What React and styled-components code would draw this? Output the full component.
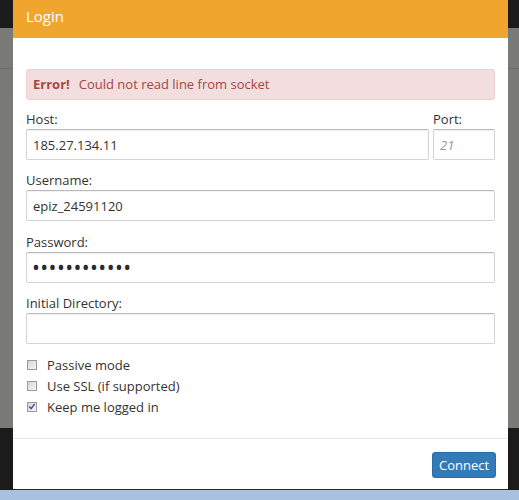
import React from "react";
import styled, { createGlobalStyle } from "styled-components";

const Global = createGlobalStyle`
  html, body { margin: 0; padding: 0; }
  body { font-family: "Open Sans", "Noto Sans", sans-serif; }
  * { box-sizing: border-box; }
`;

const Page = styled.div`
  width: 519px;
  height: 500px;
  overflow: hidden;
  padding-left: 13px;
  background: linear-gradient(
    to bottom,
    #1b1b1b 0px,
    #1b1b1b 28px,
    #797a76 28px,
    #797a76 68px,
    #6d6e6a 68px,
    #6d6e6a 69px,
    #797a76 69px,
    #797a76 428px,
    #1b1b1b 428px,
    #1b1b1b 490px,
    #a7c1df 490px
  );
`;

const Modal = styled.div`
  width: 495px;
  height: 490px;
  background: #fff;
  display: flex;
  flex-direction: column;
  border-bottom: 1px solid #2a2a2a;
`;

const Header = styled.div`
  height: 38px;
  flex: none;
  background: #f0a62e;
  color: #fff;
  font-size: 15px;
  line-height: 20px;
  padding: 6px 13px 0;
`;

const Body = styled.div`
  flex: 1;
  padding: 31px 13px 0;
  display: flex;
  flex-direction: column;
`;

const Alert = styled.div`
  height: 31px;
  background: #f2dede;
  border: 1px solid #ebccd1;
  border-radius: 3px;
  color: #a94442;
  font-size: 13px;
  line-height: 29px;
  padding: 0 6px;
  margin-bottom: 10px;
  display: flex;
  gap: 9px;
`;

const Strong = styled.b`
  font-weight: 700;
`;

const Row = styled.div`
  display: flex;
  gap: 4px;
  margin-bottom: 11.3px;
`;

const Group = styled.div`
  display: flex;
  flex-direction: column;
  flex: ${(p) => (p.$w ? `0 0 ${p.$w}px` : "1")};
  min-width: 0;
`;

const Label = styled.label`
  font-size: 13px;
  line-height: 19px;
  color: #333;
`;

const Input = styled.input`
  height: 31px;
  width: 100%;
  border: 1px solid #d3d3d3;
  border-top-color: #b9b9b9;
  border-radius: 2px;
  box-shadow: inset 0 1px 1px rgba(0, 0, 0, 0.06);
  padding: 0 6px;
  font-family: "Open Sans", "Noto Sans", sans-serif;
  font-size: 13px;
  color: #333;
  outline: none;
  background: #fff;
  &::placeholder {
    color: #999;
    font-style: italic;
  }
  &[type="password"] {
    font-size: 21px;
    letter-spacing: 0.4px;
    color: #2b2b2b;
    padding-left: 5px;
  }
`;

const Checks = styled.div`
  display: flex;
  flex-direction: column;
  margin-top: -1px;
`;

const CheckRow = styled.label`
  display: flex;
  align-items: center;
  height: 21px;
  font-size: 13px;
  color: #333;
  gap: 10px;
  padding-left: 1px;
`;

const Box = styled.span`
  width: 10px;
  height: 10px;
  border: 1px solid #9a9a9a;
  background: linear-gradient(135deg, #d8d8d8, #f4f4f4);
  display: flex;
  align-items: center;
  justify-content: center;
  flex: none;
`;

const Footer = styled.div`
  flex: none;
  border-top: 1px solid #e5e5e5;
  padding: 13px 12px 11px;
  display: flex;
  justify-content: flex-end;
`;

const Button = styled.button`
  height: 26px;
  width: 64px;
  background: #337ab7;
  border: 1px solid #2e6da4;
  border-radius: 3px;
  color: #fff;
  font-family: "Open Sans", "Noto Sans", sans-serif;
  font-size: 13px;
  padding: 0;
`;

function Check({ checked, children }) {
  return (
    <CheckRow>
      <Box>
        {checked && (
          <svg width="9" height="9" viewBox="0 0 9 9">
            <path d="M1.5 4.5 L3.5 7 L7.5 1.5" fill="none" stroke="#2a4fa8" strokeWidth="1.5" />
          </svg>
        )}
      </Box>
      {children}
    </CheckRow>
  );
}

export default function App() {
  return (
    <Page>
      <Global />
      <Modal>
        <Header>Login</Header>
        <Body>
          <Alert>
            <Strong>Error!</Strong>
            <span>Could not read line from socket</span>
          </Alert>
          <Row>
            <Group>
              <Label>Host:</Label>
              <Input defaultValue="185.27.134.11" />
            </Group>
            <Group $w={62}>
              <Label>Port:</Label>
              <Input placeholder="21" />
            </Group>
          </Row>
          <Row>
            <Group>
              <Label>Username:</Label>
              <Input defaultValue="epiz_24591120" />
            </Group>
          </Row>
          <Row>
            <Group>
              <Label>Password:</Label>
              <Input type="password" defaultValue="abcdefghijkl" />
            </Group>
          </Row>
          <Row>
            <Group>
              <Label>Initial Directory:</Label>
              <Input defaultValue="" />
            </Group>
          </Row>
          <Checks>
            <Check>Passive mode</Check>
            <Check>Use SSL (if supported)</Check>
            <Check checked>Keep me logged in</Check>
          </Checks>
        </Body>
        <Footer>
          <Button>Connect</Button>
        </Footer>
      </Modal>
    </Page>
  );
}
